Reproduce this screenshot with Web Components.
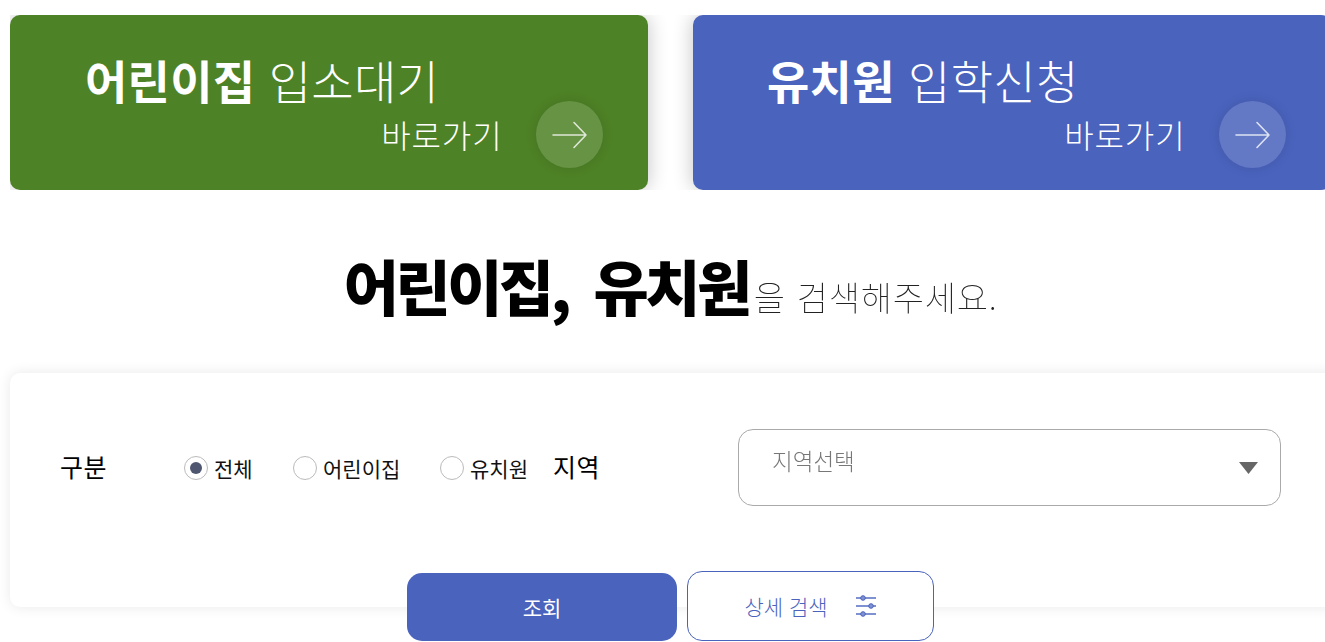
<!DOCTYPE html>
<html lang="ko">
<head>
<meta charset="utf-8">
<style>
html,body{margin:0;padding:0;background:#fff;overflow:hidden;height:642px;width:1325px}
body{font-family:"Noto Sans CJK KR","Noto Sans",sans-serif;color:#000}
</style>
</head>
<body>
<app-page></app-page>
<script>
function el(name, css, html, init){
  customElements.define(name, class extends HTMLElement{
    constructor(){super();this.attachShadow({mode:'open'}).innerHTML='<style>'+css+'</style>'+html;}
    connectedCallback(){ if(init) init(this); }
  });
}
el('quick-card',`
 :host{display:flex;flex:none;box-sizing:border-box;height:175px;width:638px;border-radius:10px;color:#fff;flex-direction:column;box-shadow:0 0 20px rgba(0,0,0,.24);background:var(--bg);position:relative}
 .title{font-size:46px;line-height:62px;letter-spacing:.3px;font-weight:300;margin:33px 0 0 var(--tl);white-space:nowrap}
 .title ::slotted(b){font-weight:700}
 .go{display:flex;align-items:center;justify-content:flex-end;margin-top:-9px;gap:33.5px;padding-right:45px}
 .go span{font-size:32px;line-height:67px;letter-spacing:.9px;font-weight:300}
 .c{width:67px;height:67px;border-radius:50%;background:rgba(255,255,255,.14);box-shadow:0 0 12px rgba(0,0,0,.12);display:flex;align-items:center;justify-content:center}
`,`<div class="title"><slot></slot></div>
<div class="go"><span>바로가기</span><div class="c"><svg width="36" height="28" viewBox="0 0 36 28" fill="none" stroke="#fff" stroke-opacity=".78" stroke-width="1.6" stroke-linecap="round" stroke-linejoin="round"><path d="M1 14H34M22 1.5 34 14 22 26.5"/></svg></div></div>`);

el('quick-row',`:host{display:flex;gap:45px;margin-left:10px;height:175px;overflow:hidden;width:1315px;box-sizing:border-box}`,`<slot></slot>`);

el('main-heading',`
 :host{display:block;text-align:center;white-space:nowrap;height:183px;box-sizing:border-box;padding:55px 0 0 16px;will-change:transform}
 .h{font-size:60px;line-height:80px;letter-spacing:-3.5px;word-spacing:12px;font-weight:900;color:#000}
 .s{font-size:34px;letter-spacing:.7px;word-spacing:1px;font-weight:100;color:#222;margin-left:5px}
`,`<span class="h">어린이집, 유치원</span><span class="s">을 검색해주세요.</span>`);

el('radio-opt',`
 :host{display:flex;align-items:center;font-size:21px;color:#111;white-space:nowrap;font-weight:400}
 i{width:24px;height:24px;border:1px solid #bbb;border-radius:50%;box-sizing:border-box;margin-right:6px;display:flex;align-items:center;justify-content:center;background:#fff}
 :host([checked]) i::after{content:"";width:12px;height:12px;border-radius:50%;background:#4f5670}
`,`<i></i><slot></slot>`);

el('region-select',`
 :host{display:flex;align-items:flex-start;justify-content:space-between;box-sizing:border-box;width:543px;height:77px;border:1px solid #aaa;border-radius:15px;padding:14px 22px 0 33px;color:#777;font-size:22.5px;font-weight:300}
 span{display:inline-block;will-change:transform}
 svg{margin-top:18px}
`,`<span>지역선택</span><svg width="19" height="12" viewBox="0 0 19 12"><path d="M0 0H19L9.5 12Z" fill="#666"/></svg>`);

el('search-card',`
 :host{display:block;width:1400px;margin-left:10px;height:234px;background:#fff;border-radius:10px;box-shadow:0 0 14px rgba(0,0,0,.09);box-sizing:border-box;padding-top:56px}
 .row{display:flex;align-items:center;height:77px;padding-left:50px}
 .lb{font-size:25px;letter-spacing:.4px;font-weight:400;color:#000;white-space:nowrap;margin-top:-3px}
 .a{width:124px;flex:none}
 .opts{display:flex;flex:none}
 .opts ::slotted(:nth-child(1)){width:109px}
 .opts ::slotted(:nth-child(2)){width:147px}
 .opts ::slotted(:nth-child(3)){width:113px}
 .b{width:185px;flex:none}
 .btns{display:flex;align-items:flex-end;gap:10px;padding-left:397px;margin-top:65px}
`,`<div class="row"><div class="lb a">구분</div><div class="opts"><slot name="opt"></slot></div><div class="lb b">지역</div><region-select></region-select></div>
<div class="btns"><slot name="btn"></slot></div>`);

el('action-button',`
 :host{display:flex;align-items:center;justify-content:center;box-sizing:border-box;background:#4a63bd;color:#fff;width:270px;height:68px;border-radius:15px;font-size:21px;font-weight:400;flex:none}
 :host([outline]){background:#fff;color:#4a63bd;border:1px solid #4a63bd;width:247px;height:70px;gap:28px;font-size:21px;font-weight:300;padding-right:1px}
 ::slotted(svg){overflow:visible}
`,`<slot></slot>`);

el('app-page',`
 :host{display:block;padding-top:15px;width:1325px;height:627px;overflow:hidden}
`,`<quick-row>
  <quick-card style="--bg:#4e8226;--tl:75px"><b>어린이집</b> 입소대기</quick-card>
  <quick-card style="--bg:#4a63bd;--tl:74px"><b>유치원</b> 입학신청</quick-card>
</quick-row>
<main-heading></main-heading>
<search-card>
  <radio-opt slot="opt" checked>전체</radio-opt>
  <radio-opt slot="opt">어린이집</radio-opt>
  <radio-opt slot="opt">유치원</radio-opt>
  <action-button slot="btn">조회</action-button>
  <action-button slot="btn" outline>상세 검색<svg width="20" height="18" viewBox="0 0 20 18" fill="none"><path d="M0 1H20M0 9H20M0 17H20" stroke="#4a63bd" stroke-opacity=".7" stroke-width="1.8"/><circle cx="7" cy="1" r="2.3" fill="#7f90d4" stroke="#4a63bd" stroke-width="1"/><circle cx="15" cy="9" r="2.3" fill="#7f90d4" stroke="#4a63bd" stroke-width="1"/><circle cx="7" cy="17" r="2.3" fill="#7f90d4" stroke="#4a63bd" stroke-width="1"/></svg></action-button>
</search-card>`);
</script>
</body>
</html>
